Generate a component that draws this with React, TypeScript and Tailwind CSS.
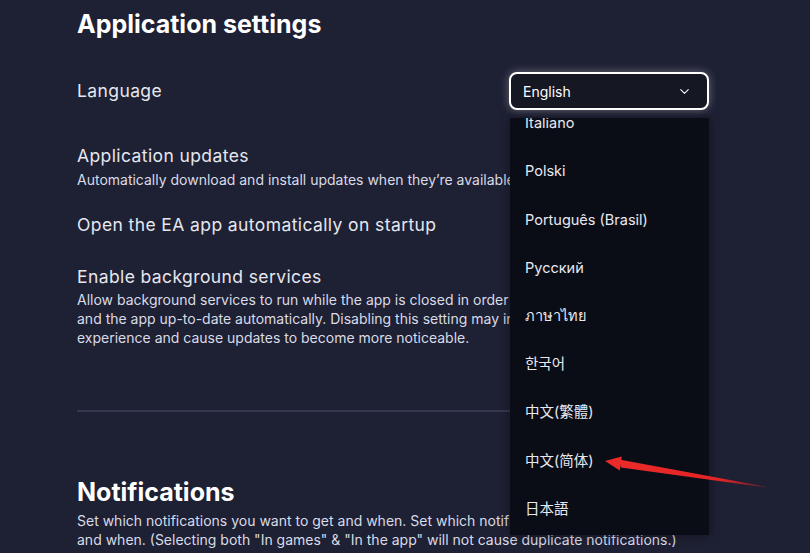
import React from "react";
import { ChevronDown } from "lucide-react";

const langs = [
  "Italiano",
  "Polski",
  "Português (Brasil)",
  "Русский",
  "ภาษาไทย",
  "한국어",
  "中文(繁體)",
  "中文(简体)",
  "日本語",
];

export default function App() {
  return (
    <div
      className="relative w-full h-[553px] overflow-hidden bg-[#1e2034] text-[#e9eaf2]"
      style={{ fontFamily: 'Inter, "Noto Sans CJK SC", "Noto Sans CJK KR", "Noto Sans", sans-serif' }}
    >
      <div className="pl-[77px] w-[709px] pt-[8px]">
        <h1 className="text-[25px] leading-[32px] font-bold text-white">Application settings</h1>

        {/* Language row */}
        <div className="mt-[32px] flex items-center justify-between h-[38px] relative">
          <span className="text-[17.5px] leading-[24px] tracking-[0.4px] text-[#e6e7ef]">Language</span>
          <div className="relative w-[200px]">
            <div className="h-[38px] rounded-[8px] border-2 border-white bg-[#151722] shadow-[0_0_8px_rgba(255,255,255,0.35)] flex items-center justify-between pl-[12px] pr-[15px]">
              <span className="text-[14px] text-white">English</span>
              <ChevronDown size={15} strokeWidth={1.75} className="text-white" />
            </div>
            <div className="absolute top-[46px] right-0 w-[199px] h-[417px] bg-[#0b0d16] overflow-hidden z-10 shadow-[0_0_10px_rgba(0,0,0,0.4)]">
              <div className="-mt-[19px] flex flex-col">
                {langs.map((l) => (
                  <div key={l} className="h-[48.2px] flex items-center pl-[15px] text-[14.5px] text-[#e8e9f0]">
                    {l}
                  </div>
                ))}
              </div>
            </div>
          </div>
        </div>

        <div className="mt-[34px]">
          <div className="text-[17.5px] leading-[24px] tracking-[0.4px] text-[#e6e7ef]">Application updates</div>
          <div className="mt-[2px] text-[14px] leading-[19px] text-[#d9dbe6] whitespace-nowrap">
            Automatically download and install updates when they’re available.
          </div>
        </div>

        <div className="mt-[24px] text-[17.5px] leading-[24px] tracking-[0.4px] text-[#e6e7ef]">
          Open the EA app automatically on startup
        </div>

        <div className="mt-[28px]">
          <div className="text-[17.5px] leading-[24px] tracking-[0.4px] text-[#e6e7ef]">Enable background services</div>
          <div className="mt-[1px] text-[14px] leading-[19px] text-[#d9dbe6] whitespace-nowrap">
            Allow background services to run while the app is closed in order to keep your games
            <br />
            and the app up-to-date automatically. Disabling this setting may impact your
            <br />
            experience and cause updates to become more noticeable.
          </div>
        </div>

        <div className="mt-[63px] h-[2px] bg-[#353850]" />

        <h2 className="mt-[64px] text-[25px] leading-[32px] font-bold text-white">Notifications</h2>
        <div className="mt-[3px] text-[14px] leading-[19px] text-[#d9dbe6] whitespace-nowrap">
          Set which notifications you want to get and when. Set which notifications you want to get
          <br />
          and when. (Selecting both "In games" &amp; "In the app" will not cause duplicate notifications.)
        </div>
      </div>

      {/* annotation arrow */}
      <svg className="absolute left-[600px] top-[450px] z-20" width="170" height="45" viewBox="0 0 170 45">
        <defs>
          <linearGradient id="fade" x1="0" y1="0" x2="1" y2="0">
            <stop offset="0" stopColor="#ec2a2a" />
            <stop offset="0.7" stopColor="#e32424" />
            <stop offset="1" stopColor="#e32424" stopOpacity="0.2" />
          </linearGradient>
        </defs>
        <polygon points="19,9.6 21,17.6 166,37.6 166,36.6" fill="url(#fade)" />
        <polygon points="5,11 21.8,6.6 19.8,20.5" fill="#ec2a2a" />
      </svg>
    </div>
  );
}
